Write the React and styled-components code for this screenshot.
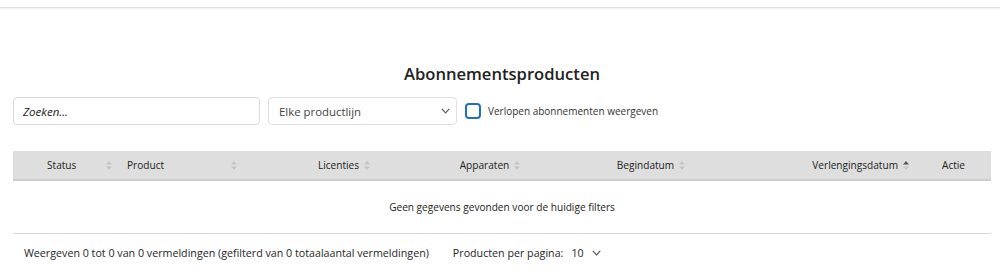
import React from 'react';
import styled, { createGlobalStyle } from 'styled-components';

const GlobalStyle = createGlobalStyle`
    html, body {
        margin: 0;
        padding: 0;
        background: #fff;
    }
    body {
        font-family: "Open Sans", "Noto Sans", sans-serif;
        color: #222;
        font-size: 12px;
    }
    * { box-sizing: border-box; }
`;

const TopBar = styled.div`
    height: 8px;
    border-bottom: 1px solid #e2e2e2;
    box-shadow: 0 1px 2px rgba(0, 0, 0, 0.06);
`;

const Page = styled.main`
    padding: 0 9px 0 13px;
`;

const Title = styled.h1`
    margin: 54px 0 0;
    text-align: center;
    font-size: 16.6px;
    font-weight: 600;
    line-height: 24px;
    color: #222;
`;

const Filters = styled.div`
    display: flex;
    align-items: center;
    gap: 8px;
    margin-top: 11px;
`;

const SearchInput = styled.input`
    width: 247px;
    height: 28px;
    border: 1px solid #d9d9d9;
    border-radius: 4px;
    padding: 0 9px;
    font: inherit;
    font-size: 11.5px;
    outline: none;
    &::placeholder {
        color: #222;
        font-style: italic;
    }
`;

const SelectBox = styled.div`
    width: 189px;
    height: 28px;
    border: 1px solid #e0e0e0;
    border-radius: 4px;
    padding: 0 6px 0 10px;
    display: flex;
    align-items: center;
    justify-content: space-between;
    font-size: 11.4px;
    color: #444;
`;

const CheckLabel = styled.label`
    display: flex;
    align-items: center;
    gap: 7px;
    font-size: 10px;
    color: #333;
`;

const CheckBox = styled.span`
    width: 16px;
    height: 16px;
    border: 2px solid #1f6fc5;
    border-radius: 4px;
`;

const Table = styled.div`
    margin-top: 26px;
`;

const HeadRow = styled.div`
    display: grid;
    grid-template-columns: 107px 125px 198px 94px 228px 165px 1fr;
    height: 30px;
    background: #dedede;
    border-bottom: 2px solid #cdcdcd;
    font-size: 10.1px;
    color: #222;
`;

const HeadCell = styled.div`
    display: flex;
    align-items: center;
    justify-content: ${p => p.$justify || 'center'};
    gap: 5px;
    padding: ${p => p.$pad || '0'};
`;

const Spacer = styled.span`
    flex: 1;
`;

const EmptyRow = styled.div`
    height: 53px;
    display: flex;
    align-items: center;
    justify-content: center;
    font-size: 10.1px;
    border-bottom: 1px solid #d8d8d8;
`;

const Footer = styled.div`
    display: flex;
    align-items: center;
    gap: 24px;
    padding: 0 0 0 11px;
    height: 37px;
    font-size: 10.7px;
    color: #262626;
`;

const PerPage = styled.div`
    display: flex;
    align-items: center;
    gap: 8px;
`;

function SortIcon({ active }) {
    return (
        <svg width="6" height="9" viewBox="0 0 6 9">
            <path d="M3 0 L6 3.5 H0 Z" fill={active ? '#555' : '#c4c4c4'} />
            <path d="M3 9 L6 5.5 H0 Z" fill="#c4c4c4" />
        </svg>
    );
}

function Chevron() {
    return (
        <svg width="9" height="6" viewBox="0 0 9 6">
            <path d="M0.8 0.8 L4.5 4.8 L8.2 0.8" fill="none" stroke="#555" strokeWidth="1.2" />
        </svg>
    );
}

function App() {
    return (
        <>
            <GlobalStyle />
            <TopBar />
            <Page>
                <Title>Abonnementsproducten</Title>
                <Filters>
                    <SearchInput placeholder="Zoeken..." />
                    <SelectBox>
                        <span>Elke productlijn</span>
                        <Chevron />
                    </SelectBox>
                    <CheckLabel>
                        <CheckBox />
                        Verlopen abonnementen weergeven
                    </CheckLabel>
                </Filters>
                <Table>
                    <HeadRow>
                        <HeadCell $justify="flex-start" $pad="0 8px 0 34px">
                            Status<Spacer /><SortIcon />
                        </HeadCell>
                        <HeadCell $justify="flex-start" $pad="0 8px 0 7px">
                            Product<Spacer /><SortIcon />
                        </HeadCell>
                        <HeadCell>Licenties<SortIcon /></HeadCell>
                        <HeadCell>Apparaten<SortIcon /></HeadCell>
                        <HeadCell>Begindatum<SortIcon /></HeadCell>
                        <HeadCell $justify="flex-end" $pad="0 21px 0 0">
                            Verlengingsdatum<SortIcon active />
                        </HeadCell>
                        <HeadCell $justify="flex-start" $pad="0 0 0 12px">Actie</HeadCell>
                    </HeadRow>
                    <EmptyRow>Geen gegevens gevonden voor de huidige filters</EmptyRow>
                </Table>
                <Footer>
                    <span>Weergeven 0 tot 0 van 0 vermeldingen (gefilterd van 0 totaalaantal vermeldingen)</span>
                    <PerPage>
                        <span>Producten per pagina:</span>
                        <span>10</span>
                        <Chevron />
                    </PerPage>
                </Footer>
            </Page>
        </>
    );
}

export default App;
